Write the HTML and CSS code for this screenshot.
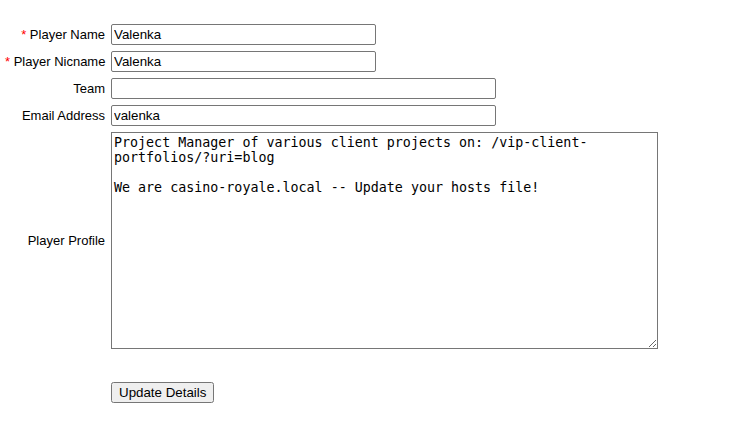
FILE: index.html
```html
<!DOCTYPE html>
<html>
<head>
<meta charset="utf-8">
<link rel="stylesheet" href="styles.css">
</head>
<body>
<form class="profile-form">
  <label class="field-label" for="name"><span class="req">*</span> Player Name</label>
  <div class="field"><input id="name" class="input input-short" type="text" value="Valenka"></div>

  <label class="field-label" for="nick"><span class="req">*</span> Player Nicname</label>
  <div class="field"><input id="nick" class="input input-short" type="text" value="Valenka"></div>

  <label class="field-label" for="team">Team</label>
  <div class="field"><input id="team" class="input input-long" type="text" value=""></div>

  <label class="field-label" for="email">Email Address</label>
  <div class="field"><input id="email" class="input input-long" type="text" value="valenka"></div>

  <label class="field-label" for="profile">Player Profile</label>
  <div class="field"><textarea id="profile" class="profile-text">Project Manager of various client projects on: /vip-client-portfolios/?uri=blog

We are casino-royale.local -- Update your hosts file!</textarea></div>

  <div class="spacer"></div>
  <div class="field actions"><button type="button" class="btn">Update Details</button></div>
</form>
</body>
</html>
```

FILE: styles.css
```css
html, body {
  margin: 0;
  padding: 0;
  background: #fff;
}

body {
  font-family: "Liberation Sans", Arial, sans-serif;
  font-size: 13px;
  color: #000;
}

.profile-form {
  display: grid;
  grid-template-columns: 100px auto;
  column-gap: 6px;
  row-gap: 6px;
  padding: 24px 0 0 5px;
  align-items: center;
}

.field-label {
  text-align: right;
  white-space: nowrap;
}

.req {
  color: #ff0000;
}

.field {
  display: flex;
}

.input {
  box-sizing: border-box;
  height: 21px;
  padding: 1px 2px;
  border: 1px solid #767676;
  border-radius: 2px;
  font-family: "Liberation Sans", Arial, sans-serif;
  font-size: 13.33px;
  color: #000;
  background: #fff;
  margin: 0;
}

.input-short {
  width: 265px;
}

.input-long {
  width: 385px;
}

.profile-text {
  box-sizing: border-box;
  width: 547px;
  height: 217px;
  margin: 0;
  padding: 2px;
  border: 1px solid #767676;
  border-radius: 0;
  font-family: "DejaVu Sans Mono", monospace;
  font-size: 13.33px;
  color: #000;
  resize: both;
}

.actions {
  margin-top: 27px;
}

.btn {
  box-sizing: border-box;
  height: 21px;
  margin: 0;
  padding: 1px 6px;
  font-family: "Liberation Sans", Arial, sans-serif;
  font-size: 13.33px;
  color: #000;
}
```
